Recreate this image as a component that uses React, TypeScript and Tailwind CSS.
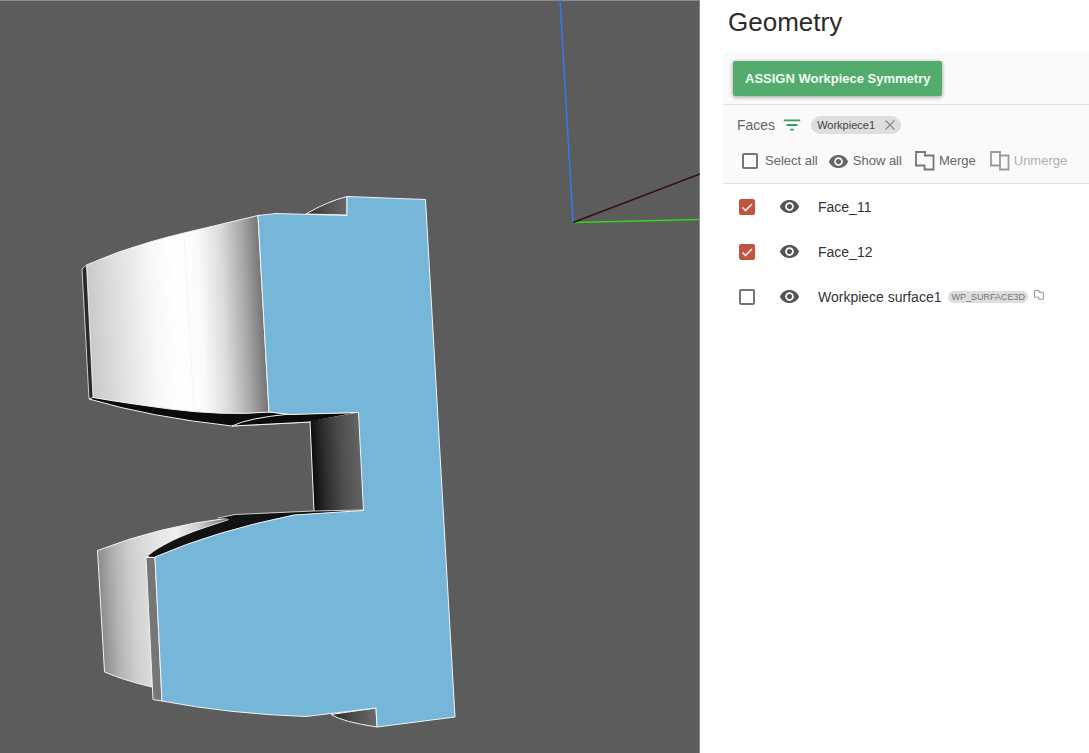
import { useState } from 'react';
import { MdFilterList, MdVisibility } from 'react-icons/md';

type Face = {
  id: string;
  name: string;
  selected: boolean;
  tag?: string;
};

const initialFaces: Face[] = [
  { id: 'face-11', name: 'Face_11', selected: true },
  { id: 'face-12', name: 'Face_12', selected: true },
  { id: 'surface-1', name: 'Workpiece surface1', selected: false, tag: 'WP_SURFACE3D' },
];

type CheckboxProps = {
  id: string;
  checked: boolean;
  onChange: (checked: boolean) => void;
};

function Checkbox({ id, checked, onChange }: CheckboxProps) {
  return (
    <span className="grid size-4 shrink-0 place-items-center">
      <input
        id={id}
        type="checkbox"
        checked={checked}
        onChange={(e) => onChange(e.target.checked)}
        className="peer col-start-1 row-start-1 size-4 appearance-none rounded-xs border-2 border-[#757575] checked:border-[#c0553f] checked:bg-[#c0553f]"
      />
      <svg
        viewBox="0 0 16 16"
        className="pointer-events-none invisible col-start-1 row-start-1 size-4 peer-checked:visible"
      >
        <path d="M3.5 8.5l3 3 6.5-6.5" fill="none" stroke="#fbe9e5" strokeWidth="1.6" />
      </svg>
    </span>
  );
}

function MergeIcon({ className }: { className: string }) {
  return (
    <svg viewBox="0 0 20 20" className={className} fill="none" stroke="currentColor" strokeWidth="1.8">
      <path d="M1 1h9v3.5h8.5v14h-9v-4H1z" />
    </svg>
  );
}

function UnmergeIcon({ className }: { className: string }) {
  return (
    <svg viewBox="0 0 20 20" className={className} fill="none" stroke="currentColor" strokeWidth="1.8">
      <path d="M1 1h9v13.5H1zM10 4.5h8.5v14H10z" />
    </svg>
  );
}

function Viewport() {
  return (
    <svg
      viewBox="0 0 700 753"
      preserveAspectRatio="xMidYMid slice"
      className="min-w-0 flex-1"
      role="img"
      aria-label="Workpiece model"
    >
      <defs>
        <linearGradient id="upperSide" gradientUnits="userSpaceOnUse" x1="88" y1="333" x2="264" y2="324">
          <stop offset="0" stopColor="#c8c8c8" />
          <stop offset="0.15" stopColor="#dcdcdc" />
          <stop offset="0.38" stopColor="#f8f8f8" />
          <stop offset="0.52" stopColor="#ffffff" />
          <stop offset="0.65" stopColor="#fafafa" />
          <stop offset="0.78" stopColor="#dadada" />
          <stop offset="0.9" stopColor="#a8a8a8" />
          <stop offset="1" stopColor="#747474" />
        </linearGradient>
        <linearGradient id="lowerSide" gradientUnits="userSpaceOnUse" x1="100" y1="580" x2="228" y2="573">
          <stop offset="0" stopColor="#8e8e8e" />
          <stop offset="0.13" stopColor="#b6b6b6" />
          <stop offset="0.26" stopColor="#d0d0d0" />
          <stop offset="0.42" stopColor="#e2e2e2" />
          <stop offset="0.62" stopColor="#f0f0f0" />
          <stop offset="0.8" stopColor="#cccccc" />
          <stop offset="1" stopColor="#777777" />
        </linearGradient>
        <linearGradient id="slot" gradientUnits="userSpaceOnUse" x1="311" y1="465" x2="361" y2="462">
          <stop offset="0" stopColor="#080808" />
          <stop offset="0.25" stopColor="#2a2a2a" />
          <stop offset="0.6" stopColor="#4c4c4c" />
          <stop offset="1" stopColor="#646464" />
        </linearGradient>
        <linearGradient id="topNotch" gradientUnits="userSpaceOnUse" x1="306" y1="210" x2="347" y2="208">
          <stop offset="0" stopColor="#2c2c2c" />
          <stop offset="0.5" stopColor="#505050" />
          <stop offset="1" stopColor="#686868" />
        </linearGradient>
        <linearGradient id="bottomNotch" gradientUnits="userSpaceOnUse" x1="331" y1="716" x2="376" y2="714">
          <stop offset="0" stopColor="#242424" />
          <stop offset="0.5" stopColor="#4c4c4c" />
          <stop offset="1" stopColor="#6a6a6a" />
        </linearGradient>
      </defs>

      <rect width="700" height="753" fill="#5c5c5c" />
      <path d="M0 0.5H699.5V753" fill="none" stroke="#8c8c8c" />

      {/* origin axes */}
      <g fill="none" strokeWidth="1.5">
        <path d="M560 0L573 222.5" stroke="#2f7bf0" />
        <path d="M573 222.5L700 219.5" stroke="#35d41f" />
        <path d="M573 222.5L700 174" stroke="#3a0c0c" />
      </g>

      <g stroke="#f2f2f2" strokeWidth="1" strokeLinejoin="round">
        {/* undersides */}
        <path d="M89 399L93 397Q180 412 269 412L290 414L358 412.5L310 422L232 426Q150 417 89 399Z" fill="#0b0b0b" />
        <path d="M232 426Q248 418 290 414L358 412.5L310 422Z" fill="#0b0b0b" />
        <path d="M310 421L358 412.5L363.5 510L314 511Z" fill="url(#slot)" stroke="none" />
        <path d="M310 421L314 511" fill="none" />

        {/* upper arm */}
        <path
          d="M86.5 265Q118 251 150 242Q167 237 184 233L258 215.5L269 412Q225 416 170 409Q125 403 93 397.5Z"
          fill="url(#upperSide)"
        />
        <path d="M82 269L86.5 265L93 397.5L89 399Z" fill="#292929" strokeOpacity="0.8" />
        <path d="M184 233L194 411" stroke="#eeeeee" strokeWidth="0.6" fill="none" />

        {/* lower arm */}
        <path
          d="M97.5 550.5Q160 526 229 518Q236 518 214 524.5Q168 539 148 556L152 687Q126 681 104.5 672Z"
          fill="url(#lowerSide)"
        />
        <path
          d="M148 556Q166 541 208 527L229 520Q229 518 218 518L235 514.5L314 511L363 510L294 515Q210 532 155 557Z"
          fill="#121212"
          stroke="none"
        />
        <path d="M218 518L235 514.5L314 511L363 510" fill="none" strokeWidth="0.8" />
        <path d="M146 557.5L155 557.5L162 701L153 699.5Z" fill="#767676" />

        {/* notches */}
        <path d="M306 214Q326 202 347 196.5V215Z" fill="url(#topNotch)" />
        <path d="M331 714.5L376 708L377 727Q343 722 331 714.5Z" fill="url(#bottomNotch)" />

        {/* symmetry face */}
        <path
          d="M258 215.5L276 213.5L347 215.5V196.5L425.5 199.5L455 717L377 727L376 708L306 716.5Q230 714 162 701L155 557Q215 531 294 515L363.5 510.5L358.5 412.5L290 414.5L269 412Z"
          fill="#76b7d9"
        />
      </g>
    </svg>
  );
}

export default function App() {
  const [faces, setFaces] = useState<Face[]>(initialFaces);
  const allSelected = faces.every((f) => f.selected);

  const selectFace = (id: string, selected: boolean) =>
    setFaces((prev) => prev.map((f) => (f.id === id ? { ...f, selected } : f)));
  const selectAll = (selected: boolean) => setFaces((prev) => prev.map((f) => ({ ...f, selected })));

  return (
    <main className="flex min-h-screen bg-white font-['Liberation_Sans',Arial,sans-serif] text-[#333333]">
      <Viewport />

      <aside className="w-[389px] shrink-0 pl-[23px]">
        <h1 className="px-[5px] pt-1 pb-3 text-[26px] leading-9 text-[#2b2b2b]">Geometry</h1>

        <div className="border-b border-[#e0e0e0] bg-[#fafafa] px-2.5 pt-[9px] pb-2">
          <button
            type="button"
            className="h-[35px] rounded-xs bg-[#53ab6d] px-3 text-[13px] font-bold whitespace-nowrap text-[#f2fbf4] shadow-[0_1px_4px_rgba(0,0,0,0.4)]"
          >
            ASSIGN Workpiece Symmetry
          </button>
        </div>

        <section className="border-b border-[#e0e0e0] bg-[#fafafa] py-2.5 text-[#666666]">
          <div className="flex h-5 items-center pl-3.5">
            <h2 className="text-sm">Faces</h2>
            <button type="button" aria-label="Filter faces" className="ml-1.5 text-[#3f9a5c]">
              <MdFilterList size={22} />
            </button>
            <span className="ml-2 flex h-[18px] items-center gap-2.5 rounded-full bg-[#dedede] px-1.5 text-[11px] text-[#444444]">
              Workpiece1
              <button type="button" aria-label="Remove Workpiece1">
                <svg viewBox="0 0 10 10" className="size-2.5" stroke="#858585" strokeWidth="1.1">
                  <path d="M0.5 0.5l9 9M9.5 0.5l-9 9" />
                </svg>
              </button>
            </span>
          </div>

          <div className="mt-3.5 flex h-6 items-center pl-[19px] text-[13px]">
            <Checkbox id="select-all" checked={allSelected} onChange={selectAll} />
            <label htmlFor="select-all" className="ml-[7px] whitespace-nowrap">
              Select all
            </label>
            <button type="button" className="ml-2.5 flex items-center gap-1 whitespace-nowrap">
              <MdVisibility size={21} />
              Show all
            </button>
            <button type="button" className="ml-[13px] flex items-center gap-1">
              <MergeIcon className="size-5 text-[#757575]" />
              Merge
            </button>
            <button type="button" disabled className="ml-3.5 flex items-center gap-1 text-[#b0b0b0]">
              <UnmergeIcon className="size-5 text-[#9a9a9a]" />
              Unmerge
            </button>
          </div>
        </section>

        <ul>
          {faces.map((face) => (
            <li key={face.id} className="flex h-[45px] items-center pl-4">
              <Checkbox id={face.id} checked={face.selected} onChange={(v) => selectFace(face.id, v)} />
              <button type="button" aria-label={`Toggle ${face.name}`} className="ml-6 text-[#555555]">
                <MdVisibility size={21} />
              </button>
              <label htmlFor={face.id} className="ml-[18px] text-sm whitespace-nowrap">
                {face.name}
              </label>
              {face.tag && (
                <>
                  <span className="ml-[7px] rounded-full bg-[#dedede] px-[3px] text-[9px] leading-3 text-[#757575]">
                    {face.tag}
                  </span>
                  <MergeIcon className="mb-1 ml-1.5 size-2.5 text-[#888888]" />
                </>
              )}
            </li>
          ))}
        </ul>
      </aside>
    </main>
  );
}
